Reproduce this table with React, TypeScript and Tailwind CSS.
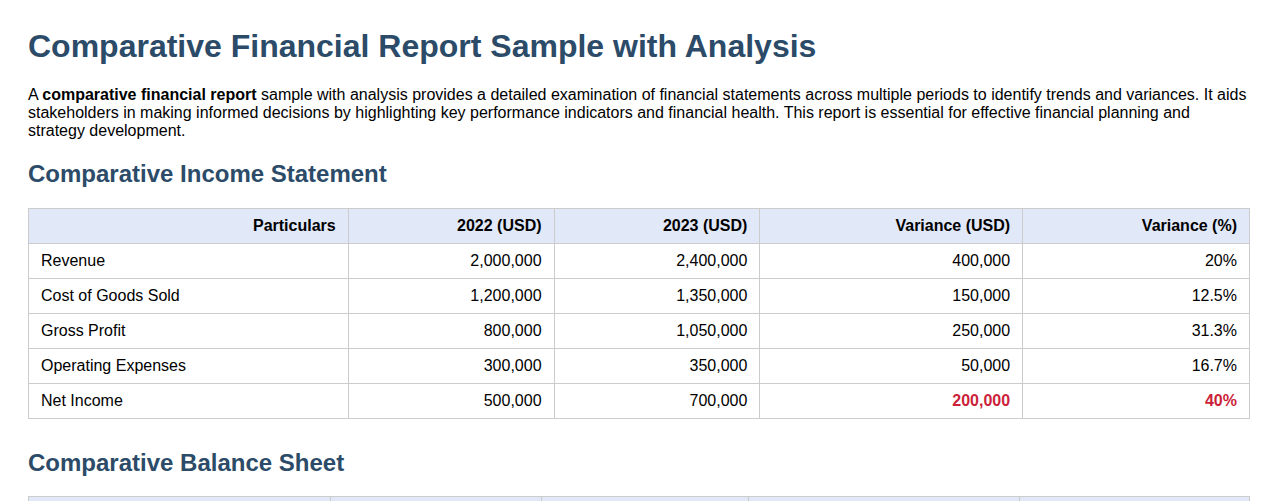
const income = [
    { name: "Revenue", y1: "2,000,000", y2: "2,400,000", v: "400,000", p: "20%" },
    { name: "Cost of Goods Sold", y1: "1,200,000", y2: "1,350,000", v: "150,000", p: "12.5%" },
    { name: "Gross Profit", y1: "800,000", y2: "1,050,000", v: "250,000", p: "31.3%" },
    { name: "Operating Expenses", y1: "300,000", y2: "350,000", v: "50,000", p: "16.7%" },
    { name: "Net Income", y1: "500,000", y2: "700,000", v: "200,000", p: "40%", hl: true },
];

const balance = [
    { name: "Total Assets", y1: "5,000,000", y2: "5,600,000", v: "600,000", p: "12%" },
    { name: "Total Liabilities", y1: "2,000,000", y2: "2,100,000", v: "100,000", p: "5%" },
];

const th = "border border-[#cccccc] bg-[#e1e8f8] px-3 h-[35px] text-right font-bold";
const td = "border border-[#cccccc] px-3 h-[35px] text-right";

function Table(props: { rows: typeof income; widths: string[] }) {
    const { rows, widths } = props;
    return (
        <table className="w-full border-collapse text-[16px] text-black">
            <thead>
                <tr>
                    <th className={`${th} ${widths[0]}`}>Particulars</th>
                    <th className={`${th} ${widths[1]}`}>2022 (USD)</th>
                    <th className={`${th} ${widths[2]}`}>2023 (USD)</th>
                    <th className={`${th} ${widths[3]}`}>Variance (USD)</th>
                    <th className={`${th} ${widths[4]}`}>Variance (%)</th>
                </tr>
            </thead>
            <tbody>
                {rows.map((r) => (
                    <tr key={r.name}>
                        <td className={`${td} !text-left`}>{r.name}</td>
                        <td className={td}>{r.y1}</td>
                        <td className={td}>{r.y2}</td>
                        <td className={`${td} ${r.hl ? "font-bold text-[#cc1f3a]" : ""}`}>{r.v}</td>
                        <td className={`${td} ${r.hl ? "font-bold text-[#cc1f3a]" : ""}`}>{r.p}</td>
                    </tr>
                ))}
            </tbody>
        </table>
    );
}

export default function App() {
    return (
        <div className="px-[28px] pt-[26px] pb-10 bg-white font-['Liberation_Sans',Arial,sans-serif]">
            <h1 className="text-[32px] leading-[40px] font-bold text-[#2b4b68]">
                Comparative Financial Report Sample with Analysis
            </h1>
            <p className="mt-[20px] text-[16px] leading-[18px] text-black">
                A <strong>comparative financial report</strong> sample with analysis provides a detailed examination of financial statements across multiple periods to identify trends and variances. It aids stakeholders in making informed decisions by highlighting key performance indicators and financial health. This report is essential for effective financial planning and strategy development.
            </p>
            <h2 className="mt-[19px] text-[24px] leading-[30px] font-bold text-[#2b4b68]">
                Comparative Income Statement
            </h2>
            <div className="mt-[19px]">
                <Table
                    rows={income}
                    widths={["w-[320px]", "w-[206px]", "w-[206px]", "w-[263px]", "w-[227px]"]}
                />
            </div>
            <h2 className="mt-[29px] text-[24px] leading-[30px] font-bold text-[#2b4b68]">
                Comparative Balance Sheet
            </h2>
            <div className="mt-[18px]">
                <Table
                    rows={balance}
                    widths={["w-[302px]", "w-[211px]", "w-[208px]", "w-[271px]", "w-[230px]"]}
                />
            </div>
        </div>
    );
}
